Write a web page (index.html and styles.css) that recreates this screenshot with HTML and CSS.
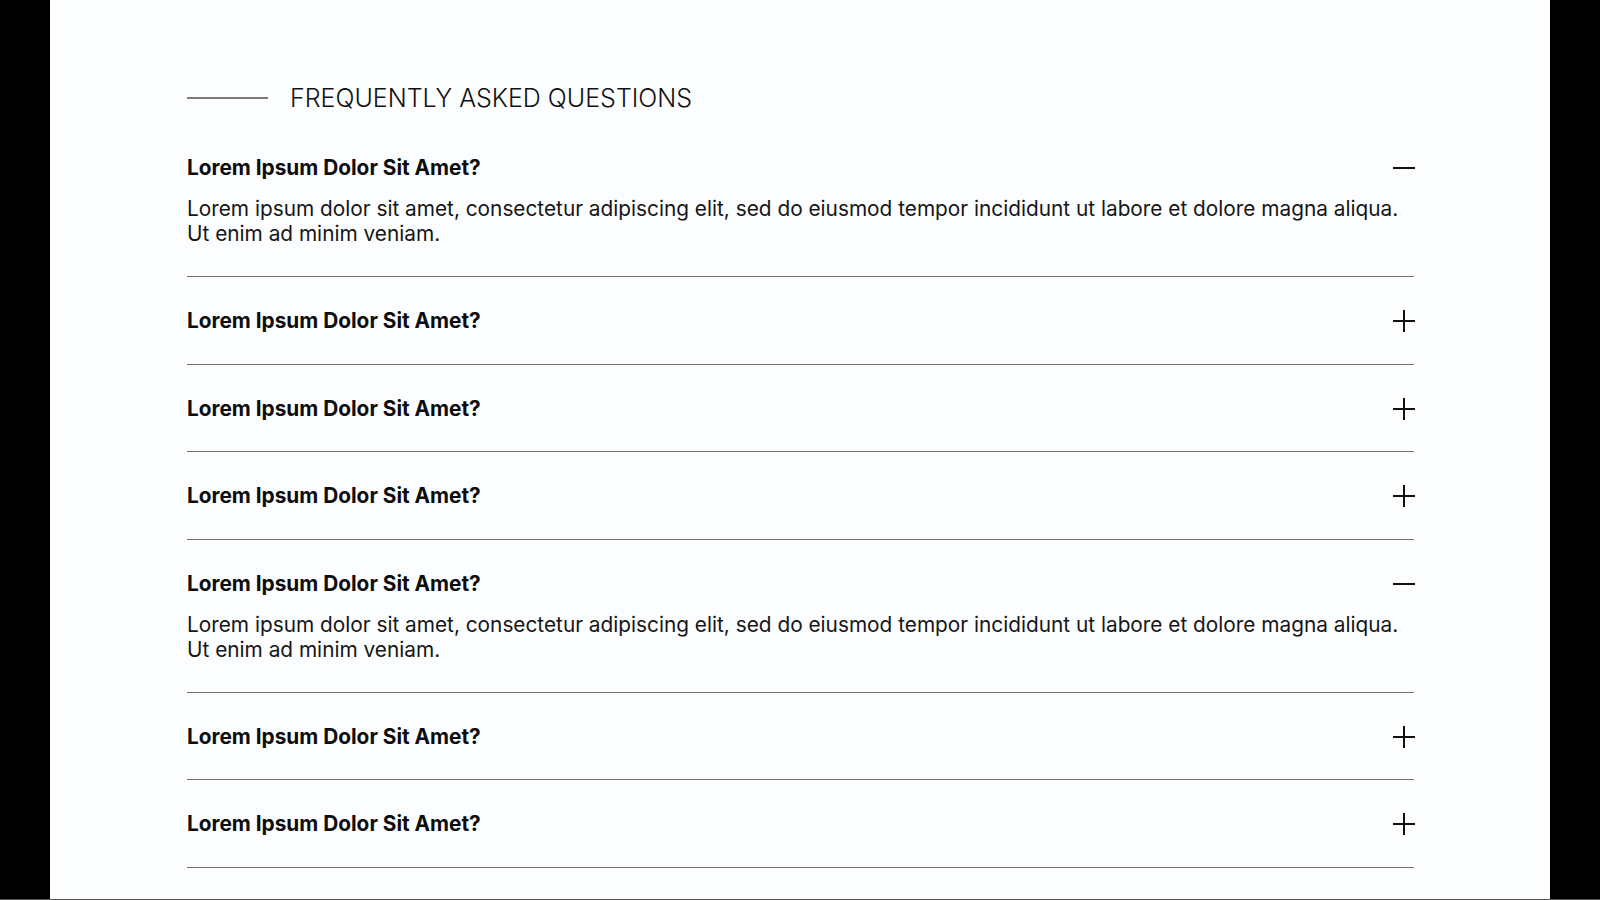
FILE: index.html
```html
<!DOCTYPE html>
<html lang="en">
<head>
<meta charset="utf-8">
<title>FAQ</title>
<link rel="stylesheet" href="styles.css">
</head>
<body>
<div class="frame">
  <main class="panel">
    <section class="faq">
      <header class="faq-head">
        <span class="faq-rule"></span>
        <h2 class="faq-title">FREQUENTLY ASKED QUESTIONS</h2>
      </header>
      <div class="faq-list">
        <div class="item open">
          <div class="q-row"><h3 class="q">Lorem Ipsum Dolor Sit Amet?</h3>
            <svg class="icon" viewBox="0 0 22 22"><path d="M0 11H22"/></svg></div>
          <p class="a">Lorem ipsum dolor sit amet, consectetur adipiscing elit, sed do eiusmod tempor incididunt ut labore et dolore magna aliqua.<br>Ut enim ad minim veniam.</p>
        </div>
        <div class="item">
          <div class="q-row"><h3 class="q">Lorem Ipsum Dolor Sit Amet?</h3>
            <svg class="icon" viewBox="0 0 22 22"><path d="M0 11H22M11 0V22"/></svg></div>
        </div>
        <div class="item">
          <div class="q-row"><h3 class="q">Lorem Ipsum Dolor Sit Amet?</h3>
            <svg class="icon" viewBox="0 0 22 22"><path d="M0 11H22M11 0V22"/></svg></div>
        </div>
        <div class="item">
          <div class="q-row"><h3 class="q">Lorem Ipsum Dolor Sit Amet?</h3>
            <svg class="icon" viewBox="0 0 22 22"><path d="M0 11H22M11 0V22"/></svg></div>
        </div>
        <div class="item open">
          <div class="q-row"><h3 class="q">Lorem Ipsum Dolor Sit Amet?</h3>
            <svg class="icon" viewBox="0 0 22 22"><path d="M0 11H22"/></svg></div>
          <p class="a">Lorem ipsum dolor sit amet, consectetur adipiscing elit, sed do eiusmod tempor incididunt ut labore et dolore magna aliqua.<br>Ut enim ad minim veniam.</p>
        </div>
        <div class="item">
          <div class="q-row"><h3 class="q">Lorem Ipsum Dolor Sit Amet?</h3>
            <svg class="icon" viewBox="0 0 22 22"><path d="M0 11H22M11 0V22"/></svg></div>
        </div>
        <div class="item">
          <div class="q-row"><h3 class="q">Lorem Ipsum Dolor Sit Amet?</h3>
            <svg class="icon" viewBox="0 0 22 22"><path d="M0 11H22M11 0V22"/></svg></div>
        </div>
      </div>
    </section>
  </main>
</div>
</body>
</html>
```
FILE: styles.css
```css
* { box-sizing: border-box; }
html, body { margin: 0; padding: 0; background: #000; }
body { font-family: Inter, "Noto Sans", sans-serif; color: #111; }
.frame {
  height: 900px;
  display: flex;
  justify-content: center;
  border-bottom: 1px solid #555;
  overflow: hidden;
}
.panel {
  width: 1500px;
  background: #fcfdff;
  padding: 83px 136px 0 137px;
}
.faq { width: 1227px; }
.faq-head {
  display: flex;
  align-items: center;
  gap: 22px;
  margin-bottom: 11px;
}
.faq-rule {
  width: 81px;
  height: 0;
  border-top: 2px solid #7a7a7a;
}
.faq-title {
  margin: 0;
  font-size: 25px;
  line-height: 30px;
  font-weight: 300;
  color: #111;
}
.item {
  padding: 32px 0 30.6px;
  border-bottom: 1px solid #6e6e6e;
}
.item.open { padding-bottom: 30px; }
.q-row {
  display: flex;
  justify-content: space-between;
  align-items: center;
}
.q {
  margin: 0;
  font-size: 20.8px;
  line-height: 24px;
  font-weight: 700;
  color: #0d0d0d;
}
.icon {
  width: 22px;
  height: 22px;
  margin-right: -1px;
  fill: none;
  stroke: #111;
  stroke-width: 2;
}
.a {
  margin: 16px 0 0;
  font-size: 20.8px;
  line-height: 25px;
  font-weight: 400;
  color: #161616;
}
```
